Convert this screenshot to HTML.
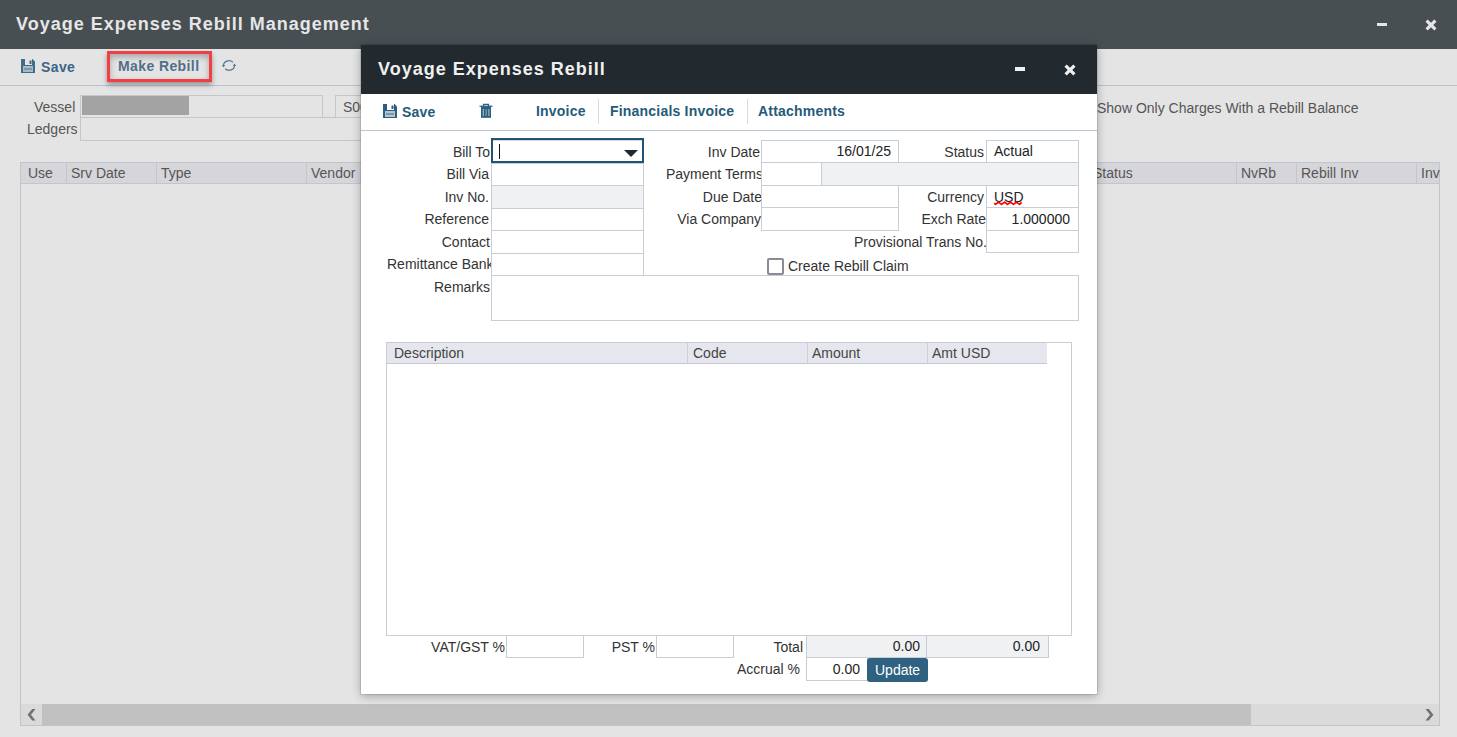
<!DOCTYPE html>
<html><head><meta charset="utf-8">
<style>
*{box-sizing:border-box;margin:0;padding:0}
html,body{width:1457px;height:737px;overflow:hidden;background:#e4e4e4;font-family:"Liberation Sans",sans-serif;position:relative}
.abs{position:absolute}
#topbar{left:0;top:0;width:1457px;height:49px;background:#484f53}
#title{left:16px;top:13px;font-size:18px;font-weight:bold;letter-spacing:1px;color:#e6e6e6;line-height:22px;white-space:nowrap}
#toolbar{left:0;top:49px;width:1457px;height:37px;background:#e4e4e4;border-bottom:1px solid #b9c1c9}
.tbtxt{font-size:14px;font-weight:bold;letter-spacing:0.4px;color:#3b6686;line-height:16px;white-space:nowrap}
.lbl{font-size:14px;color:#555;line-height:16px;white-space:nowrap}
.bginput{border:1px solid #c3c7cc;background:#e4e4e4}
#grid{left:20px;top:162px;width:1420px;height:564px;border:1px solid #c0c6cd;background:#e4e4e4}
#ghead{left:0;top:0;width:1418px;height:21px;background:#d6d6da;border-bottom:1px solid #c3c6cc}
.gcol{position:absolute;top:0;height:20px;border-left:1px solid #c3c6cc}
.gtxt{position:absolute;top:2px;font-size:14px;color:#555;line-height:16px;white-space:nowrap}
#modal{left:361px;top:45px;width:736px;height:649px;background:#fff;box-shadow:0 0 0 1px rgba(0,0,0,0.1),0 2px 9px rgba(0,0,0,0.3)}
#mhead{left:361px;top:45px;width:736px;height:49px;background:#22292f}
#mtitle{left:17px;top:13px;font-size:18px;font-weight:bold;letter-spacing:1px;color:#f0f0f0;line-height:22px;white-space:nowrap}
#mtool{left:361px;top:94px;width:736px;height:37px;border-bottom:1px solid #bcc6d0;background:#fff}
.mtxt{font-size:14px;font-weight:bold;letter-spacing:0.2px;color:#265a7a;line-height:16px;white-space:nowrap}
.fl{position:absolute;font-size:14px;color:#333;line-height:16px;white-space:nowrap;text-align:right}
.fi{position:absolute;border:1px solid #c8ced6;background:#fff}
.fv{position:absolute;font-size:14px;color:#222;line-height:16px;white-space:nowrap}
.ro{background:#f0f1f3}
.th{color:#444}
</style></head><body>

<div id="topbar" class="abs">
  <div id="title" class="abs">Voyage Expenses Rebill Management</div>
  <div class="abs" style="left:1377px;top:23px;width:10px;height:3px;background:#e6e6e6"></div>
  <svg class="abs" style="left:1425px;top:19px" width="13" height="13" viewBox="0 0 13 13"><path d="M1.6 1.6 L10.4 10.4 M10.4 1.6 L1.6 10.4" stroke="#e6e6e6" stroke-width="3.2"/></svg>
</div>

<div id="toolbar" class="abs">
  <svg class="abs" style="left:21px;top:10px" width="14" height="14" viewBox="0 0 14 14"><path d="M0 0 H11.5 L14 2.5 V14 H0 Z" fill="#3e6d8c"/><rect x="4" y="0" width="7" height="6" fill="#e4e4e4"/><rect x="8.5" y="1.5" width="2" height="3.5" fill="#3e6d8c"/><rect x="2" y="7" width="10" height="6" fill="#a9bac6"/><rect x="3" y="9" width="8" height="2" fill="#7e98aa"/></svg>
  <div class="abs tbtxt" style="left:41px;top:10px">Save</div>
  <div class="abs" style="left:107px;top:2px;width:105px;height:31px;border:3px solid #f23f44;box-shadow:0 3px 5px rgba(0,0,0,0.35), inset 0 3px 6px rgba(0,0,0,0.28)"></div>
  <div class="abs tbtxt" style="left:118px;top:9px;color:#4f6f88">Make Rebill</div>
  <svg class="abs" style="left:221px;top:10px" width="16" height="14" viewBox="0 0 16 14"><path d="M2.5 6.6 A5.5 4.8 0 0 1 11.9 3.2" stroke="#55788f" stroke-width="1.2" fill="none"/><path d="M0.8 5.9 L4.2 5.9 L2.5 8.5 Z" fill="#55788f"/><path d="M13.5 6.4 A5.5 4.8 0 0 1 4.1 9.8" stroke="#55788f" stroke-width="1.2" fill="none"/><path d="M11.8 7.1 L15.2 7.1 L13.5 4.5 Z" fill="#55788f"/></svg>
</div>

<!-- background form -->
<div class="abs lbl" style="left:34px;top:99px">Vessel</div>
<div class="abs bginput" style="left:80px;top:95px;width:243px;height:23px"></div>
<div class="abs" style="left:82px;top:96px;width:107px;height:19px;background:#a3a3a3"></div>
<div class="abs bginput" style="left:335px;top:95px;width:100px;height:23px"></div>
<div class="abs lbl" style="left:343px;top:99px">S0000</div>
<div class="abs lbl" style="left:27px;top:121px">Ledgers</div>
<div class="abs bginput" style="left:80px;top:117px;width:400px;height:24px"></div>
<div class="abs lbl" style="left:1097px;top:100px">Show Only Charges With a Rebill Balance</div>

<div id="grid" class="abs">
  <div id="ghead" class="abs">
    <div class="gtxt" style="left:7px">Use</div>
    <div class="gcol" style="left:45px"></div><div class="gtxt" style="left:50px">Srv Date</div>
    <div class="gcol" style="left:135px"></div><div class="gtxt" style="left:140px">Type</div>
    <div class="gcol" style="left:285px"></div><div class="gtxt" style="left:290px">Vendor</div>
    <div class="gtxt" style="left:1072px">Status</div>
    <div class="gcol" style="left:1215px"></div><div class="gtxt" style="left:1220px">NvRb</div>
    <div class="gcol" style="left:1275px"></div><div class="gtxt" style="left:1280px">Rebill Inv</div>
    <div class="gcol" style="left:1395px"></div><div class="gtxt" style="left:1400px">Inv</div>
  </div>
  <div class="abs" style="left:0;top:541px;width:1418px;height:21px;background:#dadada"></div>
  <div class="abs" style="left:21px;top:541px;width:1209px;height:21px;background:#c1c1c1"></div>
  <svg class="abs" style="left:6px;top:546px" width="10" height="12" viewBox="0 0 10 12"><path d="M8.5 0 H5.2 L0.6 5.7 L5.2 11.4 H8.5 L3.9 5.7 Z" fill="#707070"/></svg>
  <svg class="abs" style="left:1403px;top:546px" width="10" height="12" viewBox="0 0 10 12"><path d="M1.5 0 H4.8 L9.4 5.7 L4.8 11.4 H1.5 L6.1 5.7 Z" fill="#707070"/></svg>
</div>

<div id="modal" class="abs"></div>
<div id="mhead" class="abs">
  <div id="mtitle" class="abs">Voyage Expenses Rebill</div>
  <div class="abs" style="left:654px;top:22px;width:10px;height:4px;background:#f0f0f0"></div>
  <svg class="abs" style="left:703px;top:19px" width="13" height="13" viewBox="0 0 13 13"><path d="M1.6 1.6 L10.4 10.4 M10.4 1.6 L1.6 10.4" stroke="#f0f0f0" stroke-width="3.2"/></svg>
</div>
<div id="mtool" class="abs">
  <svg class="abs" style="left:22px;top:10px" width="14" height="14" viewBox="0 0 14 14"><path d="M0 0 H11.5 L14 2.5 V14 H0 Z" fill="#2a5f80"/><rect x="4" y="0" width="7" height="6" fill="#fff"/><rect x="8.5" y="1.5" width="2" height="3.5" fill="#2a5f80"/><rect x="2" y="7" width="10" height="6" fill="#b3c5d1"/><rect x="3" y="9" width="8" height="2" fill="#7e98aa"/></svg>
  <div class="abs mtxt" style="left:41px;top:10px">Save</div>
  <svg class="abs" style="left:118px;top:9px" width="14" height="15" viewBox="0 0 14 15"><path d="M4.5 3 V1.3 H9.5 V3" stroke="#2a5f80" stroke-width="1.2" fill="none"/><rect x="0.5" y="2.6" width="13" height="1.2" fill="#2a5f80"/><rect x="2" y="3.3" width="10" height="11.5" fill="#2a5f80"/><rect x="3.8" y="6" width="1" height="7" fill="#b3c5d1"/><rect x="6.6" y="6" width="1" height="7" fill="#8fa9bb"/><rect x="9.4" y="6" width="1" height="7" fill="#b3c5d1"/></svg>
  <div class="abs mtxt" style="left:175px;top:9px">Invoice</div>
  <div class="abs" style="left:237px;top:5px;width:1px;height:25px;background:#d8dde3"></div>
  <div class="abs mtxt" style="left:249px;top:9px">Financials Invoice</div>
  <div class="abs" style="left:386px;top:5px;width:1px;height:25px;background:#d8dde3"></div>
  <div class="abs mtxt" style="left:397px;top:9px">Attachments</div>
</div>

<!-- left column -->
<div class="fl" style="left:381px;width:109px;top:144px">Bill To</div>
<div class="fl" style="left:380px;width:109px;top:166px">Bill Via</div>
<div class="fl" style="left:380px;width:109px;top:189px">Inv No.</div>
<div class="fl" style="left:380px;width:109px;top:211px">Reference</div>
<div class="fl" style="left:380px;width:110px;top:234px">Contact</div>
<div class="fl" style="left:387px;width:104px;top:256px;overflow:hidden;text-align:left">Remittance Bank</div>
<div class="fl" style="left:380px;width:110px;top:279px">Remarks</div>
<div class="fi" style="left:491px;top:163px;width:153px;height:23px"></div>
<div class="fi ro" style="left:491px;top:185px;width:153px;height:24px"></div>
<div class="fi" style="left:491px;top:208px;width:153px;height:23px"></div>
<div class="fi" style="left:491px;top:230px;width:153px;height:24px"></div>
<div class="fi" style="left:491px;top:253px;width:153px;height:23px"></div>
<div class="fi" style="left:491px;top:275px;width:588px;height:46px"></div>
<div class="abs" style="left:491px;top:138px;width:153px;height:25px;border:2px solid #205470;background:#fff"></div>
<div class="abs" style="left:493px;top:140px;width:149px;height:1px;background:#d3d8de"></div>
<div class="abs" style="left:499px;top:144px;width:1px;height:15px;background:#111"></div>
<svg class="abs" style="left:624px;top:150px" width="14" height="7" viewBox="0 0 14 7"><path d="M0 0 H14 L7 7 Z" fill="#22292f"/></svg>

<!-- middle column -->
<div class="fl" style="left:640px;width:120px;top:144px">Inv Date</div>
<div class="fl" style="left:642px;width:120px;top:189px">Due Date</div>
<div class="fl" style="left:641px;width:120px;top:211px">Via Company</div>
<div class="fl" style="left:643px;width:120px;top:166px">Payment Terms</div>
<div class="fi" style="left:761px;top:140px;width:138px;height:23px"></div>
<div class="fv" style="left:831px;top:143px;width:60px;text-align:right">16/01/25</div>
<div class="fi" style="left:761px;top:162px;width:61px;height:24px"></div>
<div class="fi ro" style="left:821px;top:162px;width:258px;height:24px"></div>
<div class="fi" style="left:761px;top:185px;width:138px;height:23px"></div>
<div class="fi" style="left:761px;top:207px;width:138px;height:24px"></div>

<!-- right column -->
<div class="fl" style="left:880px;width:104px;top:144px">Status</div>
<div class="fl" style="left:880px;width:104px;top:189px">Currency</div>
<div class="fl" style="left:880px;width:106px;top:211px;overflow:hidden">Exch Rate</div>
<div class="fl" style="left:841px;width:146px;top:234px;overflow:hidden">Provisional Trans No.</div>
<div class="fi" style="left:986px;top:140px;width:93px;height:23px"></div>
<div class="fv" style="left:994px;top:143px">Actual</div>
<div class="fi" style="left:986px;top:185px;width:93px;height:23px"></div>
<div class="fv" style="left:994px;top:189px">USD</div>
<svg class="abs" style="left:994px;top:201px" width="30" height="5" viewBox="0 0 30 5"><path d="M0.3 2.2 L1.5 3.4 L4.5 1.1 L7.5 3.4 L10.5 1.1 L13.5 3.4 L16.5 1.1 L19.5 3.4 L22.5 1.1 L25.5 3.4 L27.7 1.3" stroke="#ff0000" stroke-width="1.7" fill="none" stroke-linejoin="round"/></svg>
<div class="fi" style="left:986px;top:207px;width:93px;height:24px"></div>
<div class="fv" style="left:1000px;top:211px;width:70px;text-align:right">1.000000</div>
<div class="fi" style="left:986px;top:230px;width:93px;height:23px"></div>

<div class="abs" style="left:767px;top:258px;width:17px;height:17px;border:2px solid #8b8a98;border-radius:2px;background:#fff"></div>
<div class="fv" style="left:788px;top:258px;color:#333">Create Rebill Claim</div>

<!-- lines table -->
<div class="abs" style="left:386px;top:342px;width:686px;height:294px;border:1px solid #c8ced6;background:#fff"></div>
<div class="abs" style="left:387px;top:343px;width:660px;height:21px;background:#e6e7ee;border-bottom:1px solid #c3c8d2"></div>
<div class="abs" style="left:687px;top:343px;width:1px;height:20px;background:#cdd1d9"></div>
<div class="abs" style="left:807px;top:343px;width:1px;height:20px;background:#cdd1d9"></div>
<div class="abs" style="left:927px;top:343px;width:1px;height:20px;background:#cdd1d9"></div>
<div class="fv th" style="left:394px;top:345px">Description</div>
<div class="fv th" style="left:693px;top:345px">Code</div>
<div class="fv th" style="left:812px;top:345px">Amount</div>
<div class="fv th" style="left:932px;top:345px">Amt USD</div>

<!-- footer -->
<div class="fl" style="left:400px;width:105px;top:639px">VAT/GST %</div>
<div class="fi" style="left:506px;top:635px;width:78px;height:23px"></div>
<div class="fl" style="left:561px;width:94px;top:639px">PST %</div>
<div class="fi" style="left:656px;top:635px;width:78px;height:23px"></div>
<div class="fl" style="left:700px;width:103px;top:639px">Total</div>
<div class="fi ro" style="left:806px;top:635px;width:122px;height:23px"></div>
<div class="fi ro" style="left:926px;top:635px;width:123px;height:23px"></div>
<div class="fv" style="left:860px;top:638px;width:60px;text-align:right">0.00</div>
<div class="fv" style="left:980px;top:638px;width:60px;text-align:right">0.00</div>
<div class="fl" style="left:700px;width:100px;top:661px">Accrual %</div>
<div class="fi" style="left:806px;top:657px;width:62px;height:24px"></div>
<div class="fv" style="left:800px;top:661px;width:60px;text-align:right">0.00</div>
<div class="abs" style="left:867px;top:658px;width:61px;height:24px;background:#2f6180;border-radius:3px"></div>
<div class="fv" style="left:875px;top:662px;color:#fff">Update</div>

</body></html>
